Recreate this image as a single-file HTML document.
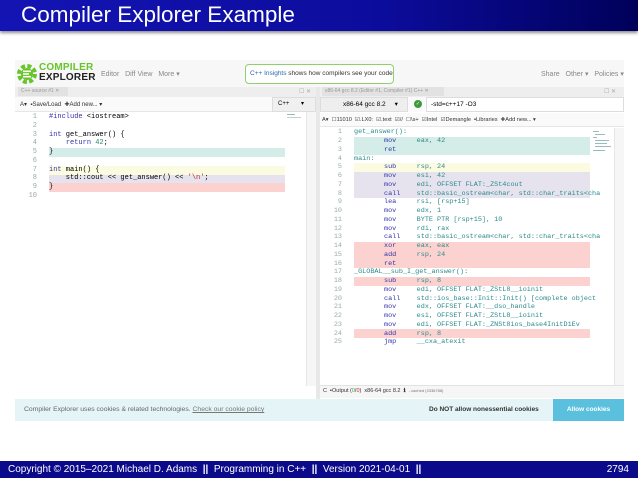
<!DOCTYPE html>
<html><head><meta charset="utf-8"><style>
*{margin:0;padding:0;box-sizing:border-box}
body{width:638px;height:478px;position:relative;background:#fff;font-family:"Liberation Sans",sans-serif;overflow:hidden}
.abs{position:absolute}
.title{left:0;top:0;width:638px;height:31px;background:linear-gradient(90deg,#1414b4 0%,#0c0c9c 60%,#00005a 100%);box-shadow:0 2px 3px rgba(0,0,0,.45);color:#fff;font-size:22.5px;padding:2px 0 0 21px}
.foot{left:0;top:461px;width:638px;height:17px;background:#0a0a8a;color:#fff;font-size:10px;line-height:17px;padding-left:8px}
.mono{font-family:"Liberation Mono",monospace;font-size:7px;white-space:pre}
.ln{position:absolute;height:8.75px;line-height:8.75px}
.num{color:#9aa;text-align:right;width:22px}
.kw{color:#3333aa}.nm{color:#2a8a6a}.st{color:#b03030}.fn{color:#2a8a8a}
.sm{font-size:6px;color:#333}
.mm{position:absolute;height:1px;background:#9bb}
</style></head><body>
<div class="abs title">Compiler Explorer Example</div>

<!-- top nav -->
<div class="abs" style="left:15px;top:60px;width:609px;height:28px;background:#f7f7f7;border-bottom:1px solid #e4e4e4"></div>
<svg class="abs" style="left:17px;top:64px" width="20" height="20" viewBox="0 0 20 20"><circle cx="10" cy="10" r="8" fill="none" stroke="#67c52a" stroke-width="4" stroke-dasharray="4 2.3"/><circle cx="10" cy="10" r="6" fill="#67c52a"/><rect x="6" y="6.5" width="8" height="1.6" fill="#fff"/><rect x="6" y="9.2" width="6" height="1.6" fill="#fff"/><rect x="6" y="11.9" width="8" height="1.6" fill="#fff"/></svg>
<div class="abs" style="left:39px;top:63px;font-size:10px;font-weight:bold;line-height:10px;letter-spacing:.2px"><span style="color:#67c52a">COMPILER</span><br><span style="color:#222">EXPLORER</span></div>
<div class="abs" style="left:101px;top:70px;font-size:7px;color:#888">Editor &nbsp; Diff View &nbsp; More ▾</div>
<div class="abs" style="left:245px;top:64px;width:149px;height:20px;border:1.5px solid #8fd06a;border-radius:4px;background:#fff;font-size:6.5px;line-height:17px;padding-left:4px;color:#333;white-space:nowrap;overflow:hidden"><span style="color:#2a6ab0">C++ Insights</span> shows how compilers see your code <span style="color:#67c52a">▾</span></div>
<div class="abs" style="left:541px;top:70px;font-size:7px;color:#888">Share &nbsp; Other ▾ &nbsp; Policies ▾</div>

<!-- left pane -->
<div class="abs" style="left:15px;top:87px;width:301px;height:10px;background:#eee"></div>
<div class="abs" style="left:18px;top:87px;width:50px;height:9px;background:#e2e2e2;font-size:5px;color:#999;line-height:9px;padding-left:3px">C++ source #1 ✕</div>
<div class="abs sm" style="left:299px;top:88px;color:#aaa">☐ ✕</div>
<div class="abs" style="left:15px;top:97px;width:301px;height:15px;background:#fafafa;border-bottom:1px solid #e6e6e6"></div>
<div class="abs sm" style="left:20px;top:101px">A▾ &nbsp;<b>▪</b>Save/Load &nbsp;✚Add new... ▾</div>
<div class="abs" style="left:272px;top:97px;width:44px;height:15px;background:#f0f0f0;border:1px solid #ddd;font-size:6px;line-height:13px;padding-left:5px">C++ &nbsp; &nbsp; &nbsp; ▾</div>
<div class="abs" style="left:49px;top:148px;width:236px;height:8.75px;background:#d4ede8"></div>
<div class="abs" style="left:49px;top:166px;width:236px;height:8.75px;background:#fbfbe2"></div>
<div class="abs" style="left:49px;top:174.5px;width:236px;height:8.75px;background:#e6e3ef"></div>
<div class="abs" style="left:49px;top:183px;width:236px;height:8.75px;background:#fbd2cf"></div>
<div class="abs" style="left:306px;top:112px;width:10px;height:274px;background:#f6f6f6;border-left:1px solid #e6e6e6"></div>
<div class="mm" style="left:287px;top:114px;width:8px"></div>
<div class="mm" style="left:287px;top:117px;width:14px;background:#ccc"></div>
<div class="abs mono" style="left:15px;top:113px">
<div class="ln num" style="top:0">1</div><div class="ln" style="top:0;left:34px"><span class="kw">#include</span> &lt;iostream&gt;</div>
<div class="ln num" style="top:8.75px">2</div>
<div class="ln num" style="top:17.5px">3</div><div class="ln" style="top:17.5px;left:34px"><span class="kw">int</span> get_answer() {</div>
<div class="ln num" style="top:26.25px">4</div><div class="ln" style="top:26.25px;left:34px">    <span class="kw">return</span> <span class="nm">42</span>;</div>
<div class="ln num" style="top:35px">5</div><div class="ln" style="top:35px;left:34px">}</div>
<div class="ln num" style="top:43.75px">6</div>
<div class="ln num" style="top:52.5px">7</div><div class="ln" style="top:52.5px;left:34px"><span class="kw">int</span> main() {</div>
<div class="ln num" style="top:61.25px">8</div><div class="ln" style="top:61.25px;left:34px">    std::cout &lt;&lt; get_answer() &lt;&lt; <span class="st">'\n'</span>;</div>
<div class="ln num" style="top:70px">9</div><div class="ln" style="top:70px;left:34px">}</div>
<div class="ln num" style="top:78.75px">10</div>
</div>
<div class="abs" style="left:316px;top:87px;width:4px;height:312px;background:#e8e8e8"></div>

<!-- right pane -->
<div class="abs" style="left:320px;top:87px;width:304px;height:10px;background:#eee"></div>
<div class="abs" style="left:322px;top:87px;width:122px;height:9px;background:#e2e2e2;font-size:5px;color:#999;line-height:9px;padding-left:3px">x86-64 gcc 8.2 (Editor #1, Compiler #1) C++ ✕</div>
<div class="abs sm" style="left:604px;top:88px;color:#aaa">☐ ✕</div>
<div class="abs" style="left:320px;top:97px;width:304px;height:15px;background:#fafafa"></div>
<div class="abs" style="left:320px;top:97px;width:88px;height:15px;background:#eee;border:1px solid #ddd;font-size:6.5px;line-height:13px;padding-left:22px">x86-64 gcc 8.2 &nbsp; &nbsp; ▾</div>
<div class="abs" style="left:414px;top:100px;width:8px;height:8px;border-radius:50%;background:#3c9a3c;color:#fff;font-size:5px;line-height:8px;text-align:center">✓</div>
<div class="abs" style="left:426px;top:97px;width:198px;height:15px;background:#fff;border:1px solid #ddd;font-size:6.5px;line-height:13px;padding-left:4px">-std=c++17 -O3</div>
<div class="abs" style="left:320px;top:113px;width:304px;height:14px;background:#fafafa;border-bottom:1px solid #e6e6e6"></div>
<div class="abs sm" style="left:322px;top:117px;font-size:5.6px">A▾ &nbsp;☐11010 &nbsp;☑.LX0: &nbsp;☑.text &nbsp;☑// &nbsp;☐\s+ &nbsp;☑Intel &nbsp;☑Demangle &nbsp;▪Libraries &nbsp;✚Add new... ▾</div>
<div class="abs" style="left:354px;top:137px;width:236px;height:17.5px;background:#d4ede8"></div>
<div class="abs" style="left:354px;top:163.25px;width:236px;height:8.75px;background:#fbfbe2"></div>
<div class="abs" style="left:354px;top:172px;width:236px;height:26.25px;background:#e6e3ef"></div>
<div class="abs" style="left:354px;top:241.75px;width:236px;height:26.25px;background:#fbd2cf"></div>
<div class="abs" style="left:354px;top:276.75px;width:236px;height:8.75px;background:#fbd2cf"></div>
<div class="abs" style="left:354px;top:329.25px;width:236px;height:8.75px;background:#fbd2cf"></div>
<div class="mm" style="left:593px;top:131px;width:6px"></div>
<div class="mm" style="left:595px;top:134px;width:10px"></div>
<div class="mm" style="left:593px;top:137px;width:4px"></div>
<div class="mm" style="left:595px;top:140px;width:14px"></div>
<div class="mm" style="left:595px;top:143px;width:12px"></div>
<div class="mm" style="left:595px;top:146px;width:16px"></div>
<div class="mm" style="left:593px;top:150px;width:12px"></div>
<div class="abs" style="left:614px;top:128px;width:10px;height:258px;background:#f6f6f6;border-left:1px solid #e6e6e6"></div>
<div class="abs mono" style="left:320px;top:128.25px;font-size:6.8px">
<div class="ln num" style="top:0">1</div><div class="ln fn" style="top:0;left:34px">get_answer():</div>
<div class="ln num" style="top:8.75px">2</div><div class="ln" style="top:8.75px;left:64px"><span class="kw">mov</span>     <span class="fn">eax, 42</span></div>
<div class="ln num" style="top:17.5px">3</div><div class="ln" style="top:17.5px;left:64px"><span class="kw">ret</span></div>
<div class="ln num" style="top:26.25px">4</div><div class="ln fn" style="top:26.25px;left:34px">main:</div>
<div class="ln num" style="top:35px">5</div><div class="ln" style="top:35px;left:64px"><span class="kw">sub</span>     <span class="fn">rsp, 24</span></div>
<div class="ln num" style="top:43.75px">6</div><div class="ln" style="top:43.75px;left:64px"><span class="kw">mov</span>     <span class="fn">esi, 42</span></div>
<div class="ln num" style="top:52.5px">7</div><div class="ln" style="top:52.5px;left:64px"><span class="kw">mov</span>     <span class="fn">edi, OFFSET FLAT:_ZSt4cout</span></div>
<div class="ln num" style="top:61.25px">8</div><div class="ln" style="top:61.25px;left:64px"><span class="kw">call</span>    <span class="fn">std::basic_ostream&lt;char, std::char_traits&lt;cha</span></div>
<div class="ln num" style="top:70px">9</div><div class="ln" style="top:70px;left:64px"><span class="kw">lea</span>     <span class="fn">rsi, [rsp+15]</span></div>
<div class="ln num" style="top:78.75px">10</div><div class="ln" style="top:78.75px;left:64px"><span class="kw">mov</span>     <span class="fn">edx, 1</span></div>
<div class="ln num" style="top:87.5px">11</div><div class="ln" style="top:87.5px;left:64px"><span class="kw">mov</span>     <span class="fn">BYTE PTR [rsp+15], 10</span></div>
<div class="ln num" style="top:96.25px">12</div><div class="ln" style="top:96.25px;left:64px"><span class="kw">mov</span>     <span class="fn">rdi, rax</span></div>
<div class="ln num" style="top:105px">13</div><div class="ln" style="top:105px;left:64px"><span class="kw">call</span>    <span class="fn">std::basic_ostream&lt;char, std::char_traits&lt;cha</span></div>
<div class="ln num" style="top:113.75px">14</div><div class="ln" style="top:113.75px;left:64px"><span class="kw">xor</span>     <span class="fn">eax, eax</span></div>
<div class="ln num" style="top:122.5px">15</div><div class="ln" style="top:122.5px;left:64px"><span class="kw">add</span>     <span class="fn">rsp, 24</span></div>
<div class="ln num" style="top:131.25px">16</div><div class="ln" style="top:131.25px;left:64px"><span class="kw">ret</span></div>
<div class="ln num" style="top:140px">17</div><div class="ln fn" style="top:140px;left:34px">_GLOBAL__sub_I_get_answer():</div>
<div class="ln num" style="top:148.75px">18</div><div class="ln" style="top:148.75px;left:64px"><span class="kw">sub</span>     <span class="fn">rsp, 8</span></div>
<div class="ln num" style="top:157.5px">19</div><div class="ln" style="top:157.5px;left:64px"><span class="kw">mov</span>     <span class="fn">edi, OFFSET FLAT:_ZStL8__ioinit</span></div>
<div class="ln num" style="top:166.25px">20</div><div class="ln" style="top:166.25px;left:64px"><span class="kw">call</span>    <span class="fn">std::ios_base::Init::Init() [complete object</span></div>
<div class="ln num" style="top:175px">21</div><div class="ln" style="top:175px;left:64px"><span class="kw">mov</span>     <span class="fn">edx, OFFSET FLAT:__dso_handle</span></div>
<div class="ln num" style="top:183.75px">22</div><div class="ln" style="top:183.75px;left:64px"><span class="kw">mov</span>     <span class="fn">esi, OFFSET FLAT:_ZStL8__ioinit</span></div>
<div class="ln num" style="top:192.5px">23</div><div class="ln" style="top:192.5px;left:64px"><span class="kw">mov</span>     <span class="fn">edi, OFFSET FLAT:_ZNSt8ios_base4InitD1Ev</span></div>
<div class="ln num" style="top:201.25px">24</div><div class="ln" style="top:201.25px;left:64px"><span class="kw">add</span>     <span class="fn">rsp, 8</span></div>
<div class="ln num" style="top:210px">25</div><div class="ln" style="top:210px;left:64px"><span class="kw">jmp</span>     <span class="fn">__cxa_atexit</span></div>
</div>
<div class="abs" style="left:320px;top:385px;width:304px;height:13px;background:#f6f6f6;border-top:1px solid #e2e2e2"></div>
<div class="abs" style="left:323px;top:388px;font-size:5.5px;color:#333">C &nbsp;▪Output (<span style="color:#3a3">0</span>/<span style="color:#c33">0</span>) &nbsp;x86-64 gcc 8.2 &nbsp;<b>ℹ</b> &nbsp;<span style="font-size:4px;color:#777">- cached (3336788)</span></div>

<!-- cookie bar -->
<div class="abs" style="left:15px;top:399px;width:609px;height:22px;background:#e5f5f7"></div>
<div class="abs" style="left:24px;top:406px;font-size:6.8px;color:#666">Compiler Explorer uses cookies &amp; related technologies. <span style="text-decoration:underline;color:#777">Check our cookie policy</span></div>
<div class="abs" style="left:429px;top:406px;font-size:6.5px;color:#333;font-weight:bold">Do NOT allow nonessential cookies</div>
<div class="abs" style="left:553px;top:399px;width:71px;height:22px;background:#5bc0de;color:#fff;font-size:6.5px;font-weight:bold;text-align:center;line-height:22px">Allow cookies</div>

<div class="abs foot">Copyright © 2015–2021 Michael D. Adams &nbsp;<b>||</b>&nbsp; Programming in C++ &nbsp;<b>||</b>&nbsp; Version 2021-04-01 &nbsp;<b>||</b><span style="position:absolute;right:9px">2794</span></div>
</body></html>
